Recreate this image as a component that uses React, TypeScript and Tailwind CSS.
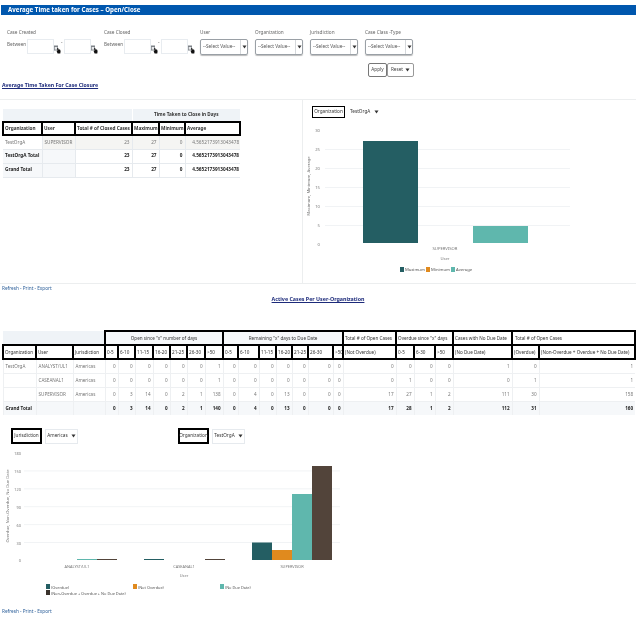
import React from 'react';

const filters = ['User', 'Organization', 'Jurisdiction', 'Case Class -Type'];

const closureRows = [
  { org: 'TestOrgA', user: 'SUPERVISOR', total: '23', max: '27', min: '0', avg: '4.5652173913043478', strong: false },
  { org: 'TestOrgA Total', user: '', total: '23', max: '27', min: '0', avg: '4.5652173913043478', strong: true },
  { org: 'Grand Total', user: '', total: '23', max: '27', min: '0', avg: '4.5652173913043478', strong: true },
];

const activeHead = ['Organization', 'User', 'Jurisdiction', '0-5', '6-10', '11-15', '16-20', '21-25', '26-30', '>50', '0-5', '6-10', '11-15', '16-20', '21-25', '26-30', '>50', '(Not Overdue)', '0-5', '6-30', '>50', '(No Due Date)', '(Overdue)', '(Non-Overdue + Overdue + No Due Date)'];

const activeRows = [
  ['TestOrgA', 'ANALYST/UL1', 'Americas', '0', '0', '0', '0', '0', '0', '1', '0', '0', '0', '0', '0', '0', '0', '0', '0', '0', '0', '1', '0', '1'],
  ['', 'CASEANAL1', 'Americas', '0', '0', '0', '0', '0', '0', '1', '0', '0', '0', '0', '0', '0', '0', '0', '1', '0', '0', '0', '1', '1'],
  ['', 'SUPERVISOR', 'Americas', '0', '3', '14', '0', '2', '1', '138', '0', '4', '0', '13', '0', '0', '0', '17', '27', '1', '2', '111', '30', '158'],
  ['Grand Total', '', '', '0', '3', '14', '0', '2', '1', '140', '0', '4', '0', '13', '0', '0', '0', '17', '28', '1', '2', '112', '31', '160'],
];

const Caret = () => (
  <svg width="5" height="4" viewBox="0 0 5 4" className="shrink-0">
    <path d="M0.5 0.5h4L2.5 3.5z" fill="#333" />
  </svg>
);

const DatePick = () => (
  <svg width="7" height="9" viewBox="0 0 7 9" className="shrink-0 self-end">
    <rect x="0" y="0.5" width="4" height="5" fill="#7d8287" />
    <rect x="0.7" y="2" width="2.6" height="2.6" fill="#e6e8ea" />
    <path d="M3.2 3l1 0 .3 1.4 1.5.2.6 1.3-.3 2.6H3.6L2.6 6l.9-.2z" fill="#111" />
  </svg>
);

const DateRange = ({ label, gap }: { label: string; gap: string }) => (
  <div className={gap}>
    <div className="h-[7px] leading-[7px] text-[#666]">{label}</div>
    <div className="mt-[3px] flex items-center">
      <span className="w-[20px] -translate-y-[2px] text-[#666]">Between</span>
      <div className="h-[15px] w-[27px] border border-[#e8ecf0] bg-white" />
      <DatePick />
      <span className="w-[3px] -translate-y-[4px] text-[#666]">-</span>
      <div className="h-[15px] w-[27px] border border-[#e8ecf0] bg-white" />
      <DatePick />
    </div>
  </div>
);

const SelectBox = ({ label }: { label: string }) => (
  <div className="w-[48px]">
    <div className="h-[7px] leading-[7px] text-[#666]">{label}</div>
    <div className="mt-[3px] flex h-[16px] items-center rounded-[2px] border border-[#9aa0a6] shadow-[0_1px_1px_#bbb]">
      <span className="flex-1 pl-[2px] text-[#555]">--Select Value--</span>
      <span className="flex h-full w-[7px] items-center justify-center border-l border-[#d5d8db]">
        <Caret />
      </span>
    </div>
  </div>
);

const PromptBox = ({ label, value, className }: { label: string; value: string; className: string }) => (
  <div className={`flex items-center ${className}`}>
    <div className="flex h-[16px] w-[31px] items-center justify-center border-2 border-black text-[#333]">{label}</div>
    <div className="ml-[3px] flex h-[15px] w-[33px] items-center justify-center gap-[3px] border border-[#e6eaee] text-[#333]">
      {value}
      <Caret />
    </div>
  </div>
);

const ReportLinks = ({ className }: { className: string }) => (
  <div className={`pl-[2px] leading-[7px] text-[#2a5d98] ${className}`}>Refresh - Print - Export</div>
);

function ClosureTable() {
  const head = ['Organization', 'User', 'Total # of Closed Cases', 'Maximum', 'Minimum', 'Average'];
  return (
    <table className="w-[237px] table-fixed border-collapse text-[4.7px]">
      <colgroup>
        <col className="w-[39px]" />
        <col className="w-[33px]" />
        <col className="w-[57px]" />
        <col className="w-[27px]" />
        <col className="w-[26px]" />
        <col className="w-[55px]" />
      </colgroup>
      <tbody>
        <tr className="h-[13px] bg-[#eff3f7]">
          <td colSpan={3} />
          <td colSpan={3} className="border-l border-white text-center font-bold text-[#333]">Time Taken to Close in Days</td>
        </tr>
        <tr className="h-[13px]">
          {head.map(h => (
            <td key={h} className="overflow-hidden border-2 border-black bg-white px-[1px] font-bold whitespace-nowrap text-[#333]">{h}</td>
          ))}
        </tr>
        {closureRows.map(r => (
          <tr key={r.org} className={`h-[14px] border-b border-[#e6eaee] ${r.strong ? 'font-bold text-[#222]' : 'bg-[#f5f5f3] text-[#777]'}`}>
            <td className={`px-[2px] whitespace-nowrap ${r.strong ? 'bg-[#f6f8fa]' : 'bg-white'}`}>{r.org}</td>
            <td className={`border-l border-[#e6eaee] px-[2px] ${r.strong ? 'bg-[#f6f8fa]' : ''}`}>{r.user}</td>
            <td className="border-l border-[#e6eaee] px-[2px] text-right">{r.total}</td>
            <td className="border-l border-[#e6eaee] px-[2px] text-right">{r.max}</td>
            <td className="border-l border-[#e6eaee] px-[2px] text-right">{r.min}</td>
            <td className="border-l border-[#e6eaee] pr-[1px] text-right whitespace-nowrap">{r.avg}</td>
          </tr>
        ))}
      </tbody>
    </table>
  );
}

function ClosureChart() {
  const ticks = [30, 25, 20, 15, 10, 5, 0];
  return (
    <svg width="300" height="160" viewBox="303 123 300 160" className="mt-[6px]" fontSize="4.2" fill="#777">
      {ticks.map((t, i) => (
        <g key={t}>
          {t > 0 && i > 0 && <line x1="325" x2="570" y1={129.5 + i * 19} y2={129.5 + i * 19} stroke="#eef0f2" strokeWidth="0.8" />}
          <text x="320" y={131 + i * 19} textAnchor="end">{t}</text>
        </g>
      ))}
      <text transform="translate(310 185) rotate(-90)" textAnchor="middle">Maximum, Minimum, Average</text>
      <rect x="363" y="140" width="55" height="102" fill="#245e63" />
      <rect x="473" y="225" width="55" height="17" fill="#5fb7ad" />
      <text x="445" y="249" textAnchor="middle">SUPERVISOR</text>
      <text x="445" y="259" textAnchor="middle">User</text>
      <rect x="400" y="266" width="4" height="5" fill="#245e63" />
      <text x="405" y="270" fill="#555">Maximum</text>
      <rect x="426" y="266" width="4" height="5" fill="#e08a1e" />
      <text x="431" y="270" fill="#555">Minimum</text>
      <rect x="451" y="266" width="4" height="5" fill="#5fb7ad" />
      <text x="456" y="270" fill="#555">Average</text>
    </svg>
  );
}

function ActiveTable() {
  const widths = ['w-[33px]', 'w-[37px]', 'w-[32px]', 'w-[13px]', 'w-[17px]', 'w-[18px]', 'w-[17px]', 'w-[17px]', 'w-[18px]', 'w-[18px]', 'w-[15px]', 'w-[21px]', 'w-[17px]', 'w-[16px]', 'w-[16px]', 'w-[25px]', 'w-[10px]', 'w-[53px]', 'w-[18px]', 'w-[21px]', 'w-[18px]', 'w-[59px]', 'w-[27px]', 'w-[96px]'];
  return (
    <table className="ml-[2px] w-[632px] table-fixed border-collapse text-[4.6px]">
      <colgroup>
        {widths.map((w, i) => (
          <col key={i} className={w} />
        ))}
      </colgroup>
      <tbody>
        <tr className="h-[14px]">
          <td colSpan={3} className="bg-[#eff3f7]" />
          <td colSpan={7} className="border-2 border-black bg-[#f6f8fa] text-center text-[#333]">Open since "x" number of days</td>
          <td colSpan={7} className="border-2 border-black bg-[#f6f8fa] text-center text-[#333]">Remaining "x" days to Due Date</td>
          <td className="border-2 border-black bg-white px-[1px] whitespace-nowrap text-[#333]">Total # of Open Cases</td>
          <td colSpan={3} className="border-2 border-black bg-white px-[1px] whitespace-nowrap text-[#333]">Overdue since "x" days</td>
          <td className="border-2 border-black bg-white px-[1px] whitespace-nowrap text-[#333]">Cases with No Due Date</td>
          <td colSpan={2} className="border-2 border-black bg-white px-[2px] whitespace-nowrap text-[#333]">Total # of Open Cases</td>
        </tr>
        <tr className="h-[14px]">
          {activeHead.map((h, i) => (
            <td key={i} className="overflow-hidden border-2 border-black bg-white px-[1px] whitespace-nowrap text-[#333]">{h}</td>
          ))}
        </tr>
        {activeRows.map((r, ri) => {
          const total = ri === 3;
          return (
            <tr key={ri} className={`h-[14px] ${total ? 'bg-[#f6f8fa] font-bold text-[#222]' : 'border-b border-[#eef0f2] text-[#777]'}`}>
              {r.map((c, i) => (
                <td key={i} className={`overflow-hidden border-l border-[#eef0f2] px-[2px] whitespace-nowrap ${i > 2 ? 'text-right' : 'text-left'}`}>{c}</td>
              ))}
            </tr>
          );
        })}
      </tbody>
    </table>
  );
}

function ActiveChart() {
  const ticks = [180, 150, 120, 90, 60, 30, 0];
  return (
    <svg width="636" height="150" viewBox="0 449 636 150" fontSize="3.9" fill="#777" className="mt-[5px]">
      {ticks.map((t, i) => (
        <g key={t}>
          {t > 0 && i > 0 && <line x1="24" x2="340" y1={453 + i * 17.9} y2={453 + i * 17.9} stroke="#eef0f2" strokeWidth="0.8" />}
          <text x="21" y={455 + i * 17.9} textAnchor="end">{t}</text>
        </g>
      ))}
      <text transform="translate(9 506) rotate(-90)" textAnchor="middle" fontSize="4.2">Overdue, Non-Overdue, No Due Date</text>
      <rect x="77" y="559" width="20" height="1" fill="#5fb7ad" />
      <rect x="97" y="559" width="20" height="1" fill="#52443a" />
      <rect x="144" y="559" width="20" height="1" fill="#245e63" />
      <rect x="205" y="559" width="20" height="1" fill="#52443a" />
      <rect x="252" y="542.5" width="20" height="17.5" fill="#245e63" />
      <rect x="272" y="550" width="20" height="10" fill="#e08a1e" />
      <rect x="292" y="494" width="20" height="66" fill="#5fb7ad" />
      <rect x="312" y="466" width="20" height="94" fill="#52443a" />
      <text x="77" y="567.5" textAnchor="middle">ANALYST/UL1</text>
      <text x="184" y="567.5" textAnchor="middle">CASEANAL1</text>
      <text x="292" y="567.5" textAnchor="middle">SUPERVISOR</text>
      <text x="184" y="577" textAnchor="middle">User</text>
      <rect x="46" y="584" width="4" height="5" fill="#245e63" />
      <text x="51" y="588.5" fill="#555">(Overdue)</text>
      <rect x="133" y="584" width="4" height="5" fill="#e08a1e" />
      <text x="138" y="588.5" fill="#555">(Not Overdue)</text>
      <rect x="220" y="584" width="4" height="5" fill="#5fb7ad" />
      <text x="225" y="588.5" fill="#555">(No Due Date)</text>
      <rect x="46" y="590" width="4" height="5" fill="#3a332c" />
      <text x="51" y="594.5" fill="#555">(Non-Overdue + Overdue + No Due Date)</text>
    </svg>
  );
}

export default function App() {
  return (
    <div className="h-[617px] w-[636px] overflow-hidden bg-white pt-[5px] font-['Noto_Sans',sans-serif] text-[4.7px] blur-[0.3px]">
      <div className="ml-[1px] flex h-[10px] items-center bg-[#0057ae] pl-[7px] text-[6.15px] font-bold text-white">
        Average Time taken for Cases – Open/Close
      </div>

      <div className="mt-[14px] ml-[7px] flex">
        <DateRange label="Case Created" gap="w-[97px]" />
        <DateRange label="Case Closed" gap="w-[96px]" />
        <div className="flex gap-[7px]">
          {filters.map(f => (
            <SelectBox key={f} label={f} />
          ))}
        </div>
      </div>

      <div className="mt-[8px] flex w-[414px] justify-end">
        <button className="h-[14px] w-[19px] rounded-[2px] border border-[#777] text-[4.7px] text-[#444]">Apply</button>
        <button className="flex h-[14px] w-[27px] items-center justify-center gap-[2px] rounded-[2px] border border-[#999] text-[4.7px] text-[#444]">
          Reset <Caret />
        </button>
      </div>

      <div className="mt-[4px] pl-[2px] text-[5.2px] leading-[8px] font-bold text-[#1c2a7a] underline">Average Time Taken For Case Closure</div>

      <div className="mt-[10px] flex h-[185px] border-y border-[#eceeef]">
        <div className="w-[302px] pt-[9px] pl-[2px]">
          <ClosureTable />
        </div>
        <div className="border-l border-[#eceeef] pt-[6px]">
          <div className="flex items-center pl-[9px] text-[#333]">
            <div className="flex h-[12px] w-[33px] items-center justify-center border border-black">Organization</div>
            <div className="ml-[5px] flex items-center gap-[4px]">
              TestOrgA <Caret />
            </div>
          </div>
          <ClosureChart />
        </div>
      </div>

      <ReportLinks className="mt-[1px]" />
      <div className="mt-[3px] text-center text-[5.3px] leading-[8px] font-bold text-[#1c2a7a] underline">Active Cases Per User-Organization</div>

      <div className="mt-[27px]">
        <ActiveTable />
      </div>

      <div className="mt-[13px] flex">
        <PromptBox label="Jurisdiction" value="Americas" className="ml-[11px] w-[167px]" />
        <PromptBox label="Organization" value="TestOrgA" className="" />
      </div>

      <ActiveChart />
      <ReportLinks className="mt-[9px]" />
    </div>
  );
}
